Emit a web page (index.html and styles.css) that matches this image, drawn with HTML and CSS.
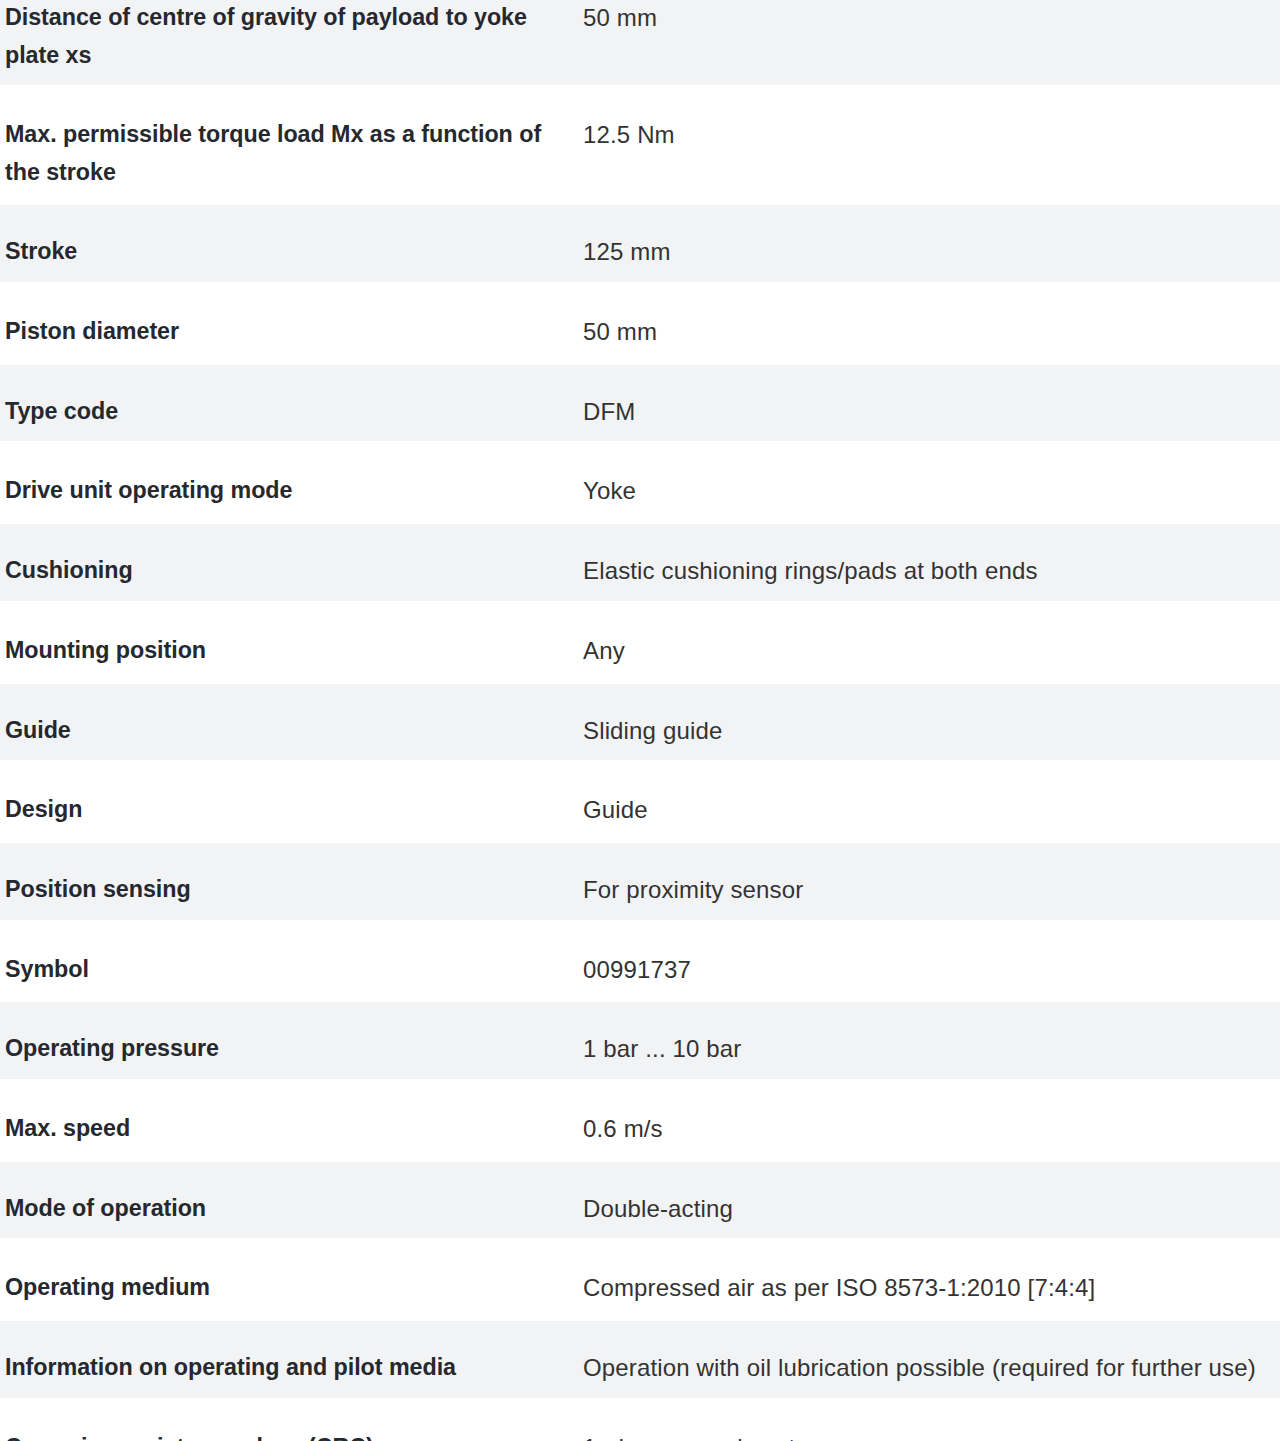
FILE: index.html
```html
<!DOCTYPE html>
<html lang="en">
<head>
<meta charset="utf-8">
<title>Technical data</title>
<link rel="stylesheet" href="styles.css">
</head>
<body>
<div class="specs">
  <div class="row gray"><div class="label">Distance of centre of gravity of payload to yoke plate xs</div><div class="value">50 mm</div></div>
  <div class="row"><div class="label">Max. permissible torque load Mx as a function of the stroke</div><div class="value">12.5 Nm</div></div>
  <div class="row gray"><div class="label">Stroke</div><div class="value">125 mm</div></div>
  <div class="row"><div class="label">Piston diameter</div><div class="value">50 mm</div></div>
  <div class="row gray"><div class="label">Type code</div><div class="value">DFM</div></div>
  <div class="row"><div class="label">Drive unit operating mode</div><div class="value">Yoke</div></div>
  <div class="row gray"><div class="label">Cushioning</div><div class="value">Elastic cushioning rings/pads at both ends</div></div>
  <div class="row"><div class="label">Mounting position</div><div class="value">Any</div></div>
  <div class="row gray"><div class="label">Guide</div><div class="value">Sliding guide</div></div>
  <div class="row"><div class="label">Design</div><div class="value">Guide</div></div>
  <div class="row gray"><div class="label">Position sensing</div><div class="value">For proximity sensor</div></div>
  <div class="row"><div class="label">Symbol</div><div class="value">00991737</div></div>
  <div class="row gray"><div class="label">Operating pressure</div><div class="value">1 bar ... 10 bar</div></div>
  <div class="row"><div class="label">Max. speed</div><div class="value">0.6 m/s</div></div>
  <div class="row gray"><div class="label">Mode of operation</div><div class="value">Double-acting</div></div>
  <div class="row"><div class="label">Operating medium</div><div class="value">Compressed air as per ISO 8573-1:2010 [7:4:4]</div></div>
  <div class="row gray"><div class="label">Information on operating and pilot media</div><div class="value">Operation with oil lubrication possible (required for further use)</div></div>
  <div class="row"><div class="label">Corrosion resistance class (CRC)</div><div class="value">1 - Low corrosion stress</div></div>
</div>
</body>
</html>
```
FILE: styles.css
```css
html, body {
  margin: 0;
  padding: 0;
  background: #ffffff;
  overflow: hidden;
}
body {
  width: 1280px;
  height: 1441px;
  font-family: "Liberation Sans", Arial, sans-serif;
  font-size: 24px;
  line-height: 37.5px;
  color: #333333;
}
.specs {
  margin-top: -32px;
}
.row {
  display: grid;
  grid-template-columns: 583px 1fr;
  padding: 31px 0 11.2px 0;
  box-sizing: border-box;
  background: #ffffff;
}
.row.gray {
  background: #f2f3f5;
  border-top: 3px solid #ffffff;
  padding-top: 28px;
}
.label {
  padding-left: 5px;
  padding-right: 22px;
  font-weight: bold;
  font-size: 23.3px;
  letter-spacing: -0.05px;
  color: #25282e;
}
.value {
  white-space: nowrap;
  letter-spacing: 0.15px;
  color: #333333;
}
```
